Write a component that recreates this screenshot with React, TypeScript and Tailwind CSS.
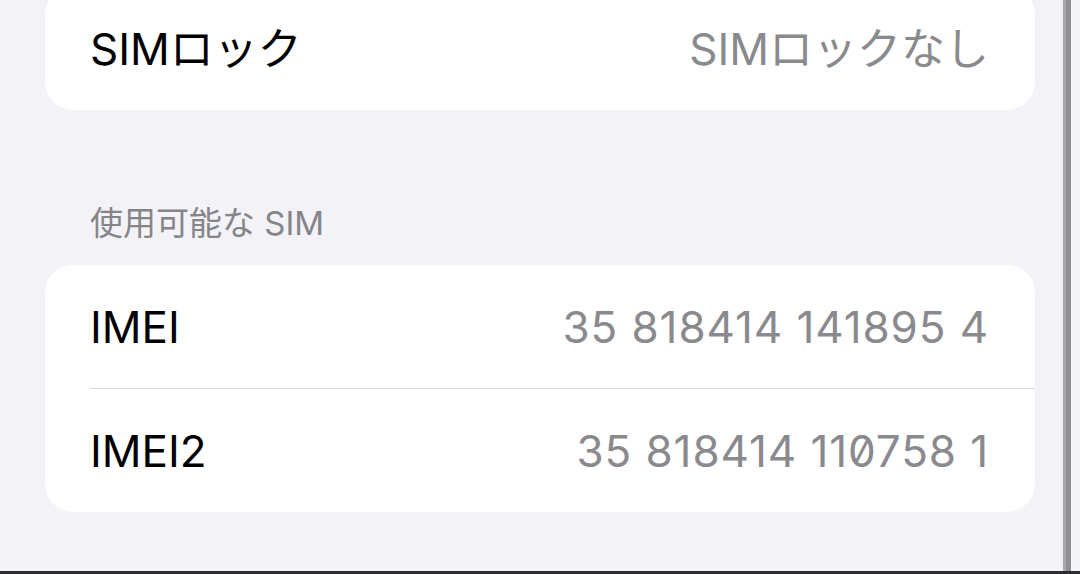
import React from "react";

type Row = { label: string; value: string; numeric?: boolean };

const lockRows: Row[] = [{ label: "SIMロック", value: "SIMロックなし" }];

const simRows: Row[] = [
  { label: "IMEI", value: "35 818414 141895 4", numeric: true },
  { label: "IMEI2", value: "35 818414 110758 1", numeric: true },
];

const font = "font-['Inter','Noto_Sans_CJK_JP',sans-serif]";

function Group({ rows }: { rows: Row[] }) {
  return (
    <div className="w-[990px] rounded-[28px] bg-white overflow-hidden">
      {rows.map((r, i) => (
        <div key={r.label}>
          {i > 0 && <div className="ml-[45px] h-px bg-[#dcdce0]" />}
          <div className="h-[123px] flex items-center justify-between pl-[45px] pr-[46px]">
            <span className="text-[44px] leading-none text-black">{r.label}</span>
            <span
              className={
                r.numeric
                  ? "text-[44px] leading-none text-[#8a8a8e] tracking-[0.9px] [font-feature-settings:'zero']"
                  : "text-[44px] leading-none text-[#8a8a8e]"
              }
            >
              {r.value}
            </span>
          </div>
        </div>
      ))}
    </div>
  );
}

export default function App() {
  return (
    <div className={`w-[1080px] h-[574px] bg-[#f2f2f7] overflow-hidden flex flex-col ${font}`}>
      <div className="flex-1 flex min-h-0">
        {/* settings list */}
        <div className="w-[1063px] pl-[45px] overflow-hidden">
          <div className="-mt-[13px]">
            <Group rows={lockRows} />
          </div>
          <div className="mt-[94px] mb-[21px] pl-[45px] h-[40px] flex items-center text-[33px] text-[#858589]">
            使用可能な SIM
          </div>
          <Group rows={simRows} />
        </div>
        {/* device edge */}
        <div className="w-[8px] flex">
          <div className="w-[3px] bg-[#a6a6ab]" />
          <div className="flex-1 bg-[#8f8f94]" />
        </div>
        <div className="flex-1" />
      </div>
      <div className="h-[3px] bg-[#2c2c2e]" />
    </div>
  );
}
